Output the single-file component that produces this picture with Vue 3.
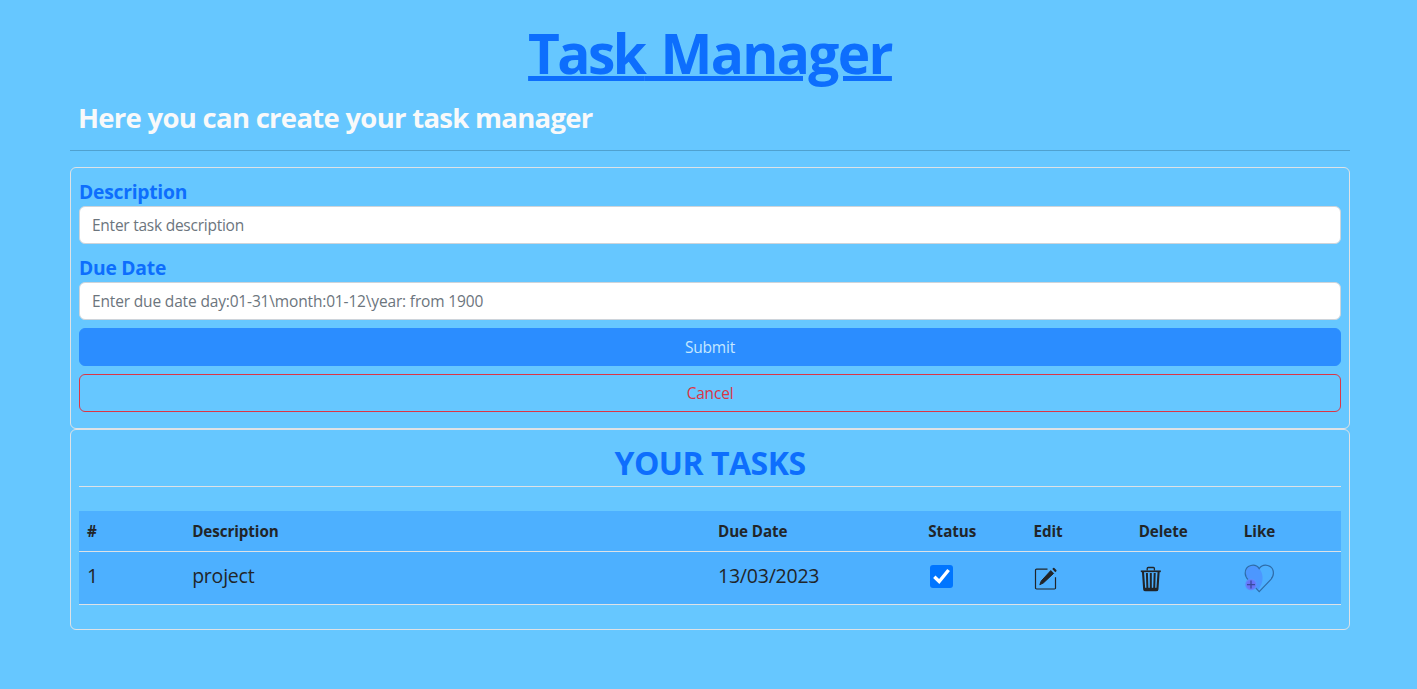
<script setup>
import { ref } from 'vue'

const description = ref('')
const dueDate = ref('')
const tasks = ref([{ id: 1, name: 'project', due: '13/03/2023', done: true }])
</script>

<template>
  <main class="page">
    <h1 class="title"><span class="title-text"><span class="tight">Task</span> Manager</span></h1>
    <h2 class="subtitle">Here you can create your task manager</h2>
    <hr class="rule" />
    <form class="box form" @submit.prevent>
      <label class="label" for="description">Description</label>
      <input id="description" v-model="description" class="input input-desc" placeholder="Enter task description" />
      <label class="label second" for="due">Due Date</label>
      <input id="due" v-model="dueDate" class="input input-due" placeholder="Enter due date day:01-31\month:01-12\year: from 1900" />
      <button class="btn submit" type="submit">Submit</button>
      <button class="btn cancel" type="button">Cancel</button>
    </form>
    <section class="box list">
      <h2 class="list-title">YOUR TASKS</h2>
      <div class="row head">
        <div class="cell">#</div>
        <div class="cell">Description</div>
        <div class="cell">Due Date</div>
        <div class="cell">Status</div>
        <div class="cell">Edit</div>
        <div class="cell">Delete</div>
        <div class="cell">Like</div>
      </div>
      <div v-for="task in tasks" :key="task.id" class="row body">
        <div class="cell">{{ task.id }}</div>
        <div class="cell">{{ task.name }}</div>
        <div class="cell">{{ task.due }}</div>
        <div class="cell">
          <svg class="check" viewBox="0 0 25 24" @click="task.done = !task.done">
            <rect x="1" y="0" width="23" height="23" rx="3" fill="#0075ff" />
            <path v-if="task.done" d="M5.3 11.8 10.2 16.5 19.6 5" fill="none" stroke="#fff" stroke-width="3.4" />
          </svg>
        </div>
        <div class="cell">
          <svg class="edit" viewBox="0 0 24 24" fill="none" stroke="#212529">
            <path d="M13.5 2.2H2.6A1.1 1.1 0 0 0 1.5 3.3v17.6A1.1 1.1 0 0 0 2.6 22h17.8a1.1 1.1 0 0 0 1.1-1.1V10.2" stroke-width="1.2" />
            <path d="m16.8 3.6 2.8 2.8L9.4 15.9l-3.6 1.8 1.5-3.8z" fill="#212529" stroke-width="1" />
            <path d="m18.3 2 .9-.9a.8.8 0 0 1 1.1 0l2 2a.8.8 0 0 1 0 1.1l-1 1z" fill="#212529" stroke="none" />
          </svg>
        </div>
        <div class="cell">
          <svg class="trash" viewBox="0 0 22 26" fill="none" stroke="#212529">
            <path d="M7.2 4.6V2.5q0-1 1-1h5.2q1 0 1 1v2.1" stroke-width="1.3" />
            <path d="M.8 5.3h20" stroke-width="1.7" />
            <path d="M3 6l1.2 17.3q.1 1 1.4 1H16q1.3 0 1.4-1L18.6 6" stroke-width="2.1" />
            <path d="m6.9 7 .5 15.5M10.8 7v15.5M14.7 7l-.5 15.5" stroke-width="2" />
            <path d="M4.5 23.1h12.6" stroke-width="2.6" />
          </svg>
        </div>
        <div class="cell">
          <svg class="heart" viewBox="0 0 32 32">
            <defs>
              <radialGradient id="plusGlow">
                <stop offset="0" stop-color="#6b6cf6" />
                <stop offset=".7" stop-color="#6677fa" />
                <stop offset="1" stop-color="#5799ff" />
              </radialGradient>
            </defs>
            <path d="M1.2 11C1.2 1.5 11.5.4 15 5.2c4.3 4.7 4.8 12.5 1.2 18.5l-2 3.3C9 21 1.2 16.6 1.2 11Z" fill="#4c97ff" />
            <path d="M15.2 5.6C19 .2 29.4 1.2 29.4 10.3c0 2.9-1.4 5.1-3.4 7.1L15.2 28.6 4.7 17.4C2.6 15.3 1.2 13.2 1.2 10.3 1.2 1.2 11.6.2 15.2 5.6Z" fill="none" stroke="#2f6ca8" stroke-width="1.2" />
            <circle cx="7" cy="21.6" r="6" fill="url(#plusGlow)" />
            <path d="M7 17.6v8M3 21.6h8" stroke="#3a4b9f" stroke-width="1.3" />
          </svg>
        </div>
      </div>
    </section>
  </main>
</template>

<style>
body {
  background: #66c7ff;
}
</style>

<style scoped>
* {
  box-sizing: border-box;
}
.page {
  width: 1280px;
  margin-left: 70px;
  font-family: "Open Sans", "Noto Sans", sans-serif;
  font-size: 15.5px;
  color: #212529;
}
h1,
h2 {
  margin: 0;
}
.title {
  height: 94px;
  padding-top: 20px;
  line-height: 66px;
  text-align: center;
  color: #0d6efd;
  font-size: 55px;
  font-weight: 700;
  letter-spacing: -1.65px;
  word-spacing: 3.6px;
}
.title-text {
  text-decoration: underline;
  text-decoration-thickness: 5px;
  text-underline-offset: 2px;
}
.tight {
  letter-spacing: -2.6px;
}
.subtitle {
  height: 56px;
  padding: 7px 8px 0;
  line-height: 34px;
  color: #f8f9fa;
  font-size: 27.5px;
  font-weight: 700;
  letter-spacing: -0.72px;
}
.rule {
  height: 1px;
  margin: 0 0 16px;
  border: 0;
  background: #4fa1d0;
}
.box {
  border: 1px solid #dee2e6;
  border-radius: 6px;
  padding: 8px;
}
.form {
  display: flex;
  flex-direction: column;
  height: 262px;
}
.label {
  height: 30px;
  line-height: 31px;
  color: #0d6efd;
  font-size: 19.3px;
  font-weight: 700;
  letter-spacing: -0.25px;
}
.second {
  margin-top: 8px;
}
.input {
  height: 38px;
  padding: 0 12px;
  border: 1px solid #ced4da;
  border-radius: 6px;
  background: #fff;
  font: inherit;
  outline: none;
}
.input-desc {
  letter-spacing: -0.25px;
}
.input-due {
  letter-spacing: -0.16px;
}
.input::placeholder {
  color: #6c757d;
  opacity: 1;
}
.btn {
  height: 38px;
  margin-top: 8px;
  padding: 0;
  border: 1px solid #dc3545;
  border-radius: 6px;
  background: transparent;
  color: #dc3545;
  font: inherit;
  letter-spacing: -0.2px;
}
.submit {
  border-color: #2b8dff;
  background: #2b8dff;
  color: #c5e8ff;
}
.list {
  height: 201px;
}
.list-title {
  height: 49px;
  margin-bottom: 24px;
  padding-top: 5px;
  border-bottom: 1px solid #dee2e6;
  line-height: 40px;
  text-align: center;
  color: #0d6efd;
  font-size: 32px;
  font-weight: 700;
  letter-spacing: -0.5px;
}
.row {
  display: grid;
  grid-template-columns: 1fr 5fr 2fr repeat(4, 1fr);
  background: #4db0ff;
  border-bottom: 1px solid #dee2e6;
}
.cell {
  min-width: 0;
  padding: 8px 8px 0;
}
.head {
  height: 41px;
  line-height: 25px;
  font-size: 15.2px;
  font-weight: 700;
  letter-spacing: -0.08px;
}
.body {
  height: 53px;
  line-height: 31px;
  font-size: 19.5px;
  letter-spacing: -0.22px;
}
svg {
  display: block;
}
.check {
  width: 25px;
  height: 24px;
  margin: 5px 0 0 1px;
}
.edit {
  width: 24px;
  height: 24px;
  margin: 7px 0 0 1px;
}
.trash {
  width: 22px;
  height: 26px;
  margin: 6px 0 0 1px;
}
.heart {
  width: 32px;
  height: 32px;
  margin-top: 3px;
}
</style>
